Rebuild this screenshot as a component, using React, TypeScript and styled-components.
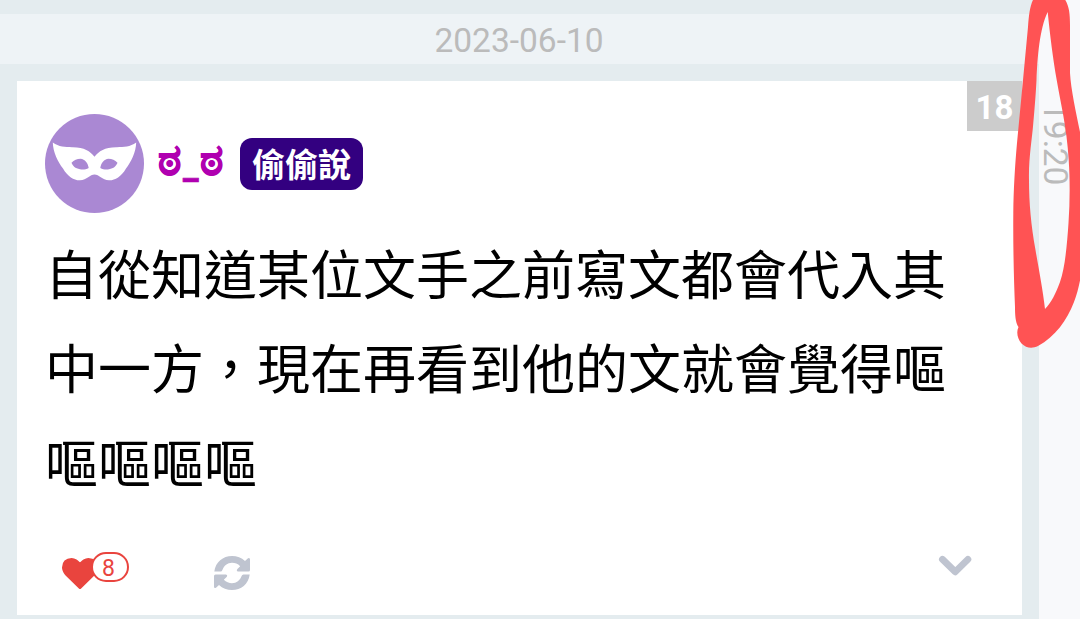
import React from 'react'
import styled, { createGlobalStyle } from 'styled-components'

const GlobalStyle = createGlobalStyle`
  * {
    box-sizing: border-box;
  }

  body {
    margin: 0;
    overflow: hidden;
    background: #e4ecef;
    font-family: Roboto, 'Noto Sans CJK TC', sans-serif;
  }
`

const Page = styled.div`
  position: relative;
  display: flex;
  width: 1080px;
  height: 619px;
  overflow: hidden;
`

const Timeline = styled.main`
  width: 1039px;
  padding-top: 14px;
`

const DateBar = styled.div`
  height: 50px;
  margin-bottom: 17px;
  padding-right: 1px;
  background: #eef3f6;
  color: #bbbbbb;
  font-size: 33.5px;
  line-height: 54px;
  text-align: center;
`

const Side = styled.aside`
  flex: 1;
  padding: 102px 0 0 2px;
  background: #f8f9fb;
`

const Time = styled.time`
  display: block;
  writing-mode: vertical-rl;
  color: #bbbbbb;
  font-size: 33.5px;
  line-height: 29px;
`

const Card = styled.article`
  display: flex;
  flex-direction: column;
  width: 1005px;
  height: 534px;
  margin-left: 17px;
  background: #ffffff;
`

const CardHeader = styled.header`
  display: flex;
  height: 144px;
  padding-left: 28px;
`

const Avatar = styled.svg`
  flex: none;
  width: 99px;
  height: 99px;
  margin-top: 33px;
`

const Nickname = styled.span`
  display: flex;
  width: 67px;
  margin: 55px 0 0 14px;
  color: #b000b0;
  font-size: 44px;
  font-weight: 700;
  line-height: 48px;
  white-space: nowrap;
  -webkit-text-stroke: 0.7px #b000b0;
`

const Mouth = styled.span`
  margin: 7px 1px 0 2px;
  font-size: 35px;
`

const Tag = styled.span`
  height: 52px;
  margin: 57px auto 0 15px;
  padding: 0 12px;
  border-radius: 12px;
  background: #330080;
  color: #ffffff;
  font-family: 'Noto Sans CJK TC', sans-serif;
  font-size: 33px;
  font-weight: 700;
  line-height: 51px;
`

const Limit = styled.span`
  width: 55px;
  height: 50px;
  background: #cccccc;
  color: #ffffff;
  font-size: 33px;
  font-weight: 700;
  line-height: 53px;
  text-align: center;
`

const Content = styled.p`
  flex: 1;
  width: 940px;
  margin: 0;
  padding-left: 28px;
  color: #000000;
  font-family: 'Noto Sans CJK TC', sans-serif;
  font-size: 53px;
  line-height: 94.4px;
`

const Actions = styled.footer`
  display: flex;
  align-items: flex-start;
  height: 78px;
  padding: 15px 50px 0 45px;
  color: #bfc4d0;
`

const Likes = styled.div`
  display: flex;
  width: 152px;
  color: #e9443e;
`

const Heart = styled.svg`
  width: 36px;
  height: 31px;
  margin-top: 6px;
`

const LikeCount = styled.span`
  z-index: 1;
  width: 38px;
  height: 30px;
  margin-left: -7px;
  padding-right: 3px;
  border: 2px solid #e9443e;
  border-radius: 15px;
  background: #ffffff;
  font-size: 23px;
  line-height: 29px;
  text-align: center;
`

const Refresh = styled.svg`
  width: 36px;
  height: 34px;
  margin-top: 4px;
`

const Chevron = styled.svg`
  width: 34px;
  height: 22px;
  margin: 3px 0 0 auto;
`

const Scribble = styled.svg`
  position: absolute;
  top: 0;
  right: 0;
  width: 70px;
  height: 350px;
`

const refreshArrow =
  'M0.3 15.6C1.5 6 9 0 18 0C23 0 27.5 1.8 31 5L34 2.2Q36 1.2 36 3.6V14Q36 15.6 34.5 15.6H24Q22 15 23.4 13L26.2 10.2C23.8 7.8 21 6.8 18 6.8C13.4 6.8 10 9.8 8.4 14Q7.8 15.6 6.6 15.6Z'

const App = () => {
  return (
    <>
      <GlobalStyle />
      <Page>
        <Timeline>
          <DateBar>2023-06-10</DateBar>
          <Card>
            <CardHeader>
              <Avatar viewBox="0 0 99 99">
                <circle cx="49.5" cy="49.5" r="49.5" fill="#aa88d3" />
                <path
                  fill="#ffffff"
                  fillRule="evenodd"
                  d="M7.8 28.5C14 33 20 33 27 33.2C39 33 45 37 49.5 42.8C54 37 60 33 72 33.2C79 33 85 33 91.2 28.5C91 38 86 48 81 54.5C76 63 70 66.5 64 66.3C57 66 54 60.5 49.5 60.5C45 60.5 42 66 35 66.3C29 66.5 23 63 18 54.5C13 48 8 38 7.8 28.5ZM26.5 48.8C29 45.8 32 44.7 35.5 44.7C40 45 43 49 43.7 54C41 55.5 38 55.8 35 55.3C30 54.5 28 52 26.5 48.8ZM72.5 48.8C70 45.8 67 44.7 63.5 44.7C59 45 56 49 55.3 54C58 55.5 61 55.8 64 55.3C69 54.5 71 52 72.5 48.8Z"
                />
              </Avatar>
              <Nickname>
                ಠ<Mouth>_</Mouth>ಠ
              </Nickname>
              <Tag>偷偷說</Tag>
              <Limit>18</Limit>
            </CardHeader>
            <Content>
              自從知道某位文手之前寫文都會代入其<br />
              中一方，現在再看到他的文就會覺得嘔<br />
              嘔嘔嘔嘔
            </Content>
            <Actions>
              <Likes>
                <Heart viewBox="0 128 1792 1536" preserveAspectRatio="none" fill="currentColor">
                  <path d="M896 1664q-26 0-44-18l-624-602q-10-8-27.5-26t-55.5-65.5-68-97.5-53.5-121-23.5-138q0-220 127-344t351-124q62 0 126.5 21.5t120 58 95.5 68.5 76 68q36-36 76-68t95.5-68.5 120-58 126.5-21.5q224 0 351 124t127 344q0 221-229 450l-623 600q-18 18-44 18z" />
                </Heart>
                <LikeCount>8</LikeCount>
              </Likes>
              <Refresh viewBox="0 0 36 34" fill="currentColor">
                <path d={refreshArrow} />
                <path d={refreshArrow} transform="rotate(180 18 17)" />
              </Refresh>
              <Chevron viewBox="0 0 34 22">
                <path d="M4.4 4.3L17.2 16.8L29.9 4.3" fill="none" stroke="currentColor" strokeWidth="6.8" strokeLinecap="round" strokeLinejoin="round" />
              </Chevron>
            </Actions>
          </Card>
        </Timeline>
        <Side>
          <Time>19:20</Time>
        </Side>
        <Scribble viewBox="1010 0 70 350">
          <path
            fill="#ff5354"
            fillRule="evenodd"
            d="M1034 -2C1030 5 1029 14 1028 27L1023 80L1017 143C1015 165 1013.5 190 1013.3 213C1013 250 1014 282 1015 307C1015 315 1015.5 323 1018.5 327C1016 332 1017.5 339 1021.5 343.5C1026 348 1032 349 1038 346C1055 337 1067 320 1074 302C1078 292 1080 281 1082 270L1082 142C1078 121 1071 92 1070 73L1070 25C1070 13 1069 5 1064 -2ZM1047.7 12C1050 35 1053 59 1056.7 80C1060 100 1067 128 1068.7 160C1070 180 1070 202 1068.5 223C1067 245 1065 268 1060 282C1056 293 1051 303 1045 309C1043 290 1038 265 1035.5 250C1031 225 1029 203 1029 180C1028.5 158 1032 140 1033.3 123C1035 105 1036 90 1036.5 80C1037.5 57 1039.5 29 1047.7 12Z"
          />
        </Scribble>
      </Page>
    </>
  )
}

export default App
